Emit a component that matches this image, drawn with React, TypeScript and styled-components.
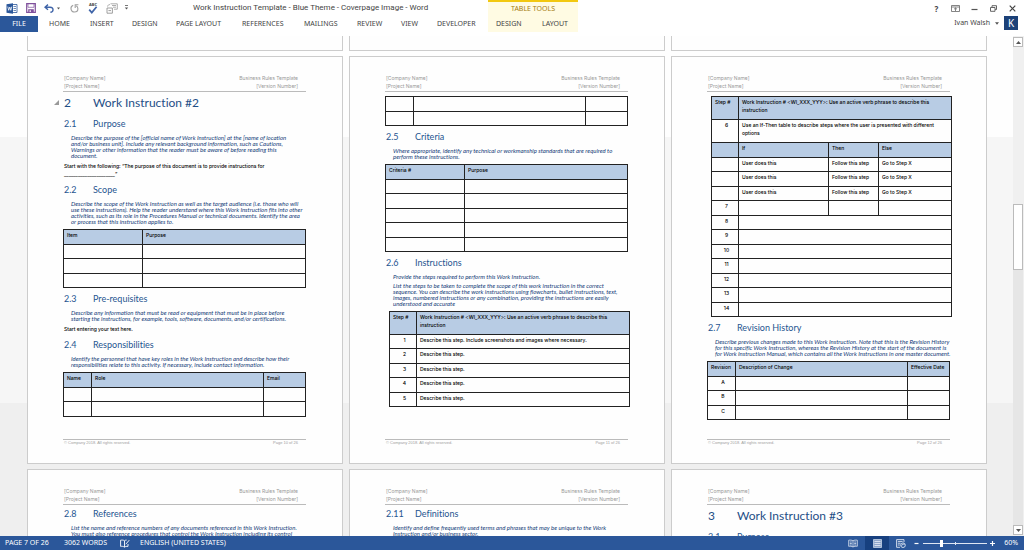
import React from 'react';
import styled, { createGlobalStyle, css } from 'styled-components';

const ui = `'Noto Sans', 'Open Sans', sans-serif`;
const body = `Inter, 'Noto Sans', Arial, sans-serif`;
const display = `Lato, 'Century Gothic', sans-serif`;

const Global = createGlobalStyle`
  *, *::before, *::after { box-sizing: border-box; }
  body { margin: 0; background: #fff; font-family: ${ui}; font-variant-ligatures: none; }
  button { border: 0; padding: 0; background: none; font: inherit; color: inherit; cursor: pointer; }
  h1, h2, p { margin: 0; font-weight: 400; }
`;

const Shell = styled.div`
  display: flex;
  flex-direction: column;
  height: 100vh;
  overflow: hidden;
`;

/* ---------- title bar and ribbon ---------- */

const TopBar = styled.header`
  flex: none;
  height: 36px;
  display: flex;
  justify-content: space-between;
  color: #444;
`;

const TitleRow = styled.div`
  height: 16px;
  display: flex;
  align-items: center;
`;

const QuickAccess = styled.div`
  width: 193px;
  padding-left: 6px;
  display: flex;
  align-items: center;
`;

const QuickButton = styled.button<{ $w: number }>`
  width: ${(p) => p.$w}px;
  height: 14px;
  display: flex;
  align-items: center;
`;

const DocTitle = styled.span`
  font-family: Roboto, 'Open Sans', sans-serif;
  font-size: 8px;
  line-height: 16px;
  white-space: nowrap;
`;

const Tabs = styled.nav`
  display: flex;
  height: 16px;
`;

const Tab = styled.button<{ $w: number }>`
  width: ${(p) => p.$w}px;
  text-align: left;
  font-size: 7px;
  line-height: 16px;
  white-space: nowrap;
`;

const FileTab = styled.button`
  width: 38px;
  margin-right: 11px;
  background: #2b579a;
  color: #fff;
  font-size: 7px;
  line-height: 16px;
`;

const MainPart = styled.div`
  display: flex;
`;

const ContextGroup = styled.div`
  width: 90px;
  height: 32px;
  border-top: 2px solid #f2c811;
  background: #fffbe3;
`;

const ContextTitle = styled.div`
  height: 14px;
  font-size: 7px;
  line-height: 13px;
  text-align: center;
  color: #a57c10;
`;

const ContextTabs = styled.div`
  display: flex;
  justify-content: space-between;
  padding: 0 10px 0 8px;
  font-size: 7px;
  line-height: 16px;
`;

const TopRight = styled.div`
  display: flex;
  flex-direction: column;
  align-items: flex-end;
  padding-right: 6px;
`;

const WindowButtons = styled.div`
  height: 16px;
  display: flex;
  align-items: center;
  gap: 8px;
`;

const WindowButton = styled.button`
  width: 11px;
  height: 12px;
  display: flex;
  align-items: center;
  justify-content: center;
  font-size: 8px;
  font-weight: 700;
`;

const Account = styled.button`
  display: flex;
  align-items: center;
  gap: 5px;
  font-size: 7px;
  line-height: 14px;
`;

const Avatar = styled.span`
  width: 14px;
  height: 14px;
  background: #1c4178;
  color: #fff;
  font-size: 10px;
  line-height: 14px;
  text-align: center;
`;

/* ---------- document area ---------- */

const Workspace = styled.main`
  flex: 1;
  min-height: 0;
  display: flex;
  background: linear-gradient(to bottom, #fefefe 0 101px, #f6f6f6 101px 367px, #efefef 367px);
`;

const Canvas = styled.div`
  flex: 1;
  min-width: 0;
  overflow: hidden;
  display: grid;
  grid-template-columns: repeat(3, minmax(0, 1fr));
  grid-auto-rows: max-content;
  gap: 5px 6px;
  padding: 0 26px 0 27px;
`;

const PageTail = styled.div`
  height: 15px;
  background: #fefefe;
  border: 1px solid #ccc;
  border-top: 0;
`;

const Sheet = styled.article`
  min-height: 408px;
  display: flex;
  flex-direction: column;
  padding: 17px 36px 12px 35px;
  background: #fefefe;
  border: 1px solid #ccc;
`;

const PageHeader = styled.div`
  display: flex;
  justify-content: space-between;
  padding: 0 8px 1px 1px;
  border-bottom: 1px solid #bbb;
  font-family: ${body};
  font-size: 5px;
  line-height: 8px;
  color: #999;
`;

const HeaderColumn = styled.div<{ $right?: boolean }>`
  display: flex;
  flex-direction: column;
  text-align: ${(p) => (p.$right ? 'right' : 'left')};
`;

const PageFooter = styled.div`
  margin-top: auto;
  display: flex;
  justify-content: space-between;
  padding: 0 8px 5px 1px;
  border-top: 1px solid #bbb;
  font-family: 'Liberation Sans', Arial, sans-serif;
  font-size: 4px;
  line-height: 6px;
  color: #a0a0a0;
`;

const Grid = styled.table<{ $inset?: boolean }>`
  width: ${(p) => (p.$inset ? '241px' : '100%')};
  margin-left: ${(p) => (p.$inset ? '4px' : '0')};
  border-collapse: collapse;
  table-layout: fixed;
  font-family: ${body};
  font-size: 5px;
  line-height: 8px;
  color: #000;

  tr { height: 15px; }
  tr:nth-child(even) { height: 14px; }
`;

const cell = css<{ $center?: boolean }>`
  padding: 1px 0 0 3px;
  border: 1px solid #222;
  font-weight: 500;
  vertical-align: top;
  white-space: nowrap;
  text-align: ${(p) => (p.$center ? 'center' : 'left')};
`;

const Th = styled.th<{ $center?: boolean }>`
  ${cell}
  background: #b8cce4;
`;

const Td = styled.td<{ $center?: boolean }>`
  ${cell}
`;

const TallRow = styled.tr`
  &&& { height: 23px; }
`;

const Content = styled.div`
  padding-top: 3px;

  table:first-child { margin-top: 1px; }
  p + table { margin-top: 4px; }
  p + p { margin-top: 3px; }
  p + h2 { margin-top: 6px; }
  table + h2 { margin-top: 5px; }
`;

const Chapter = styled.h1`
  position: relative;
  display: flex;
  padding-left: 1px;
  margin-bottom: 7px;
  font-family: ${display};
  font-size: 12px;
  line-height: 16px;
  color: #1f4e86;
  white-space: nowrap;
`;

const Section = styled.h2`
  display: flex;
  padding-left: 1px;
  margin-bottom: 5px;
  font-family: ${display};
  font-size: 9px;
  line-height: 12px;
  color: #1f5590;
  white-space: nowrap;
`;

const Num = styled.span`
  width: 29px;
`;

const CollapseMark = styled.svg`
  position: absolute;
  left: -9px;
  top: 5px;
`;

const Guide = styled.p`
  padding-left: 8px;
  font-family: ${display};
  font-size: 6px;
  font-style: italic;
  line-height: 6px;
  color: #123a78;
  white-space: nowrap;
`;

const Plain = styled.p`
  padding-left: 1px;
  font-family: ${body};
  font-size: 5px;
  font-weight: 500;
  line-height: 8px;
  color: #000;
  white-space: nowrap;
`;

const Line = styled.span`
  display: block;
`;

/* ---------- scroll bar ---------- */

const ScrollBar = styled.div`
  width: 11px;
  padding: 1px 1px 1px 0;
  display: flex;
  flex-direction: column;
  background: #f0f0f0;
`;

const ScrollButton = styled.button`
  height: 10px;
  border: 1px solid #bbb;
  background: #fff;
  display: flex;
  align-items: center;
  justify-content: center;
`;

const TrackAbove = styled.div`
  flex: 158;
`;

const Thumb = styled.div`
  flex: 64;
  border: 1px solid #bbb;
  background: #fff;
`;

const TrackBelow = styled.div`
  flex: 256;
  background: #e6e6e6;
`;

/* ---------- status bar ---------- */

const StatusBar = styled.footer`
  flex: none;
  height: 14px;
  display: flex;
  align-items: center;
  justify-content: space-between;
  padding: 0 6px 0 5px;
  background: #2b579a;
  color: #fff;
  font-size: 7px;
  line-height: 14px;
`;

const StatusGroup = styled.div`
  display: flex;
  align-items: center;
`;

const StatusItem = styled.button<{ $w: number }>`
  width: ${(p) => p.$w}px;
  height: 14px;
  display: flex;
  align-items: center;
  white-space: nowrap;
`;

const ViewButton = styled.button<{ $active?: boolean }>`
  width: 24px;
  height: 14px;
  display: flex;
  align-items: center;
  justify-content: center;
  background: ${(p) => (p.$active ? '#17407f' : 'transparent')};
`;

const ZoomStep = styled.button`
  width: 7px;
  height: 14px;
  display: flex;
  align-items: center;
  justify-content: center;
`;

const ZoomRange = styled.input`
  appearance: none;
  width: 64px;
  height: 7px;
  margin: 0 2px 0 3px;
  background:
    linear-gradient(#dfe7f3, #dfe7f3) 32px 2px / 1px 3px no-repeat,
    linear-gradient(#dfe7f3, #dfe7f3) 0 3px / 100% 1px no-repeat;

  &::-webkit-slider-thumb {
    appearance: none;
    width: 3px;
    height: 7px;
    background: #fff;
  }
`;

const ZoomValue = styled.button`
  width: 22px;
  text-align: right;
`;

const Caret = ({ up = false, size = 5 }: { up?: boolean; size?: number }) => (
  <svg width={size} height="3" viewBox="0 0 5 3" aria-hidden="true">
    <path d={up ? 'M0 3L2.5 0L5 3Z' : 'M0 0H5L2.5 3Z'} fill="#555" />
  </svg>
);

const WordIcon = () => (
  <svg width="12" height="11" viewBox="0 0 12 11" aria-hidden="true">
    <path d="M6.5 1.5H11V9.5H6.5" fill="#fff" stroke="#2b579a" strokeWidth="0.8" />
    <path d="M7.5 3.5H10M7.5 5.5H10M7.5 7.5H10" stroke="#2b579a" strokeWidth="0.7" />
    <path d="M0.5 1.3L7 0.2V10.8L0.5 9.7Z" fill="#2b579a" />
    <path d="M1.8 3.6L2.7 7.3L3.8 4L4.8 7.3L5.8 3.6" fill="none" stroke="#fff" strokeWidth="0.8" />
  </svg>
);

const SaveIcon = () => (
  <svg width="10" height="10" viewBox="0 0 10 10" aria-hidden="true">
    <path d="M0.7 0.7H9.3V9.3H0.7Z" fill="#fff" stroke="#80519c" strokeWidth="1.2" />
    <path d="M2 1V4.3H8V1" fill="none" stroke="#80519c" strokeWidth="0.7" />
    <path d="M2.2 9V6.2H7.8V9Z" fill="#80519c" />
    <path d="M3.6 7.2H4.8V9H3.6Z" fill="#fff" />
  </svg>
);

const UndoIcon = () => (
  <svg width="10" height="9" viewBox="0 0 10 9" aria-hidden="true">
    <path d="M4 0.6L1 3.2L4 5.8M1.2 3.2H6C8.2 3.2 9.1 4.6 9 6C8.9 7.3 7.8 8.2 6.4 8.3" fill="none" stroke="#3f64a8" strokeWidth="1.4" />
  </svg>
);

const RedoIcon = () => (
  <svg width="9" height="9" viewBox="0 0 9 9" aria-hidden="true">
    <path d="M3.2 1.2C1.6 1.8 0.8 3.2 1 4.8C1.3 6.8 2.7 8 4.5 8C6.4 8 7.9 6.7 7.9 4.7C7.9 3.4 7.3 2.4 6.2 1.8" fill="none" stroke="#a0a0a0" strokeWidth="1.1" />
    <path d="M8.4 0.8H5.2V3.9" fill="none" stroke="#a0a0a0" strokeWidth="1.1" />
  </svg>
);

const SpellIcon = () => (
  <svg width="10" height="12" viewBox="0 0 10 12" aria-hidden="true">
    <text x="5" y="4" textAnchor="middle" fontFamily="Noto Sans, sans-serif" fontWeight="700" fontSize="4" fill="#444">ABC</text>
    <path d="M1.2 7.6L3.8 10.6L8.6 4.8" fill="none" stroke="#3f64a8" strokeWidth="1.7" />
  </svg>
);

const TouchIcon = () => (
  <svg width="12" height="11" viewBox="0 0 12 11" aria-hidden="true">
    <path d="M4.5 0.8H11.3V6.2H8" fill="none" stroke="#999" strokeWidth="0.8" />
    <path d="M6 2.5H10M7 4.2H10" stroke="#999" strokeWidth="0.8" />
    <path d="M1 5H6.4V10.2H1ZM2.4 7.6H5" fill="#fff" stroke="#888" strokeWidth="0.8" />
    <path d="M1.6 3.6C1.6 2.2 2.6 1.6 4 1.6" fill="none" stroke="#999" strokeWidth="0.8" />
  </svg>
);

const MenuCaret = () => (
  <svg width="5" height="6" viewBox="0 0 5 6" aria-hidden="true">
    <path d="M1 0.5H4" stroke="#555" strokeWidth="0.8" />
    <path d="M0.8 2.6H4.2L2.5 4.6Z" fill="#555" />
  </svg>
);

const H = ({ n, children }: { n: string; children: string }) => (
  <Section><Num>{n}</Num>{children}</Section>
);

const G = ({ lines }: { lines: string[] }) => (
  <Guide>{lines.map((t) => <Line key={t}>{t}</Line>)}</Guide>
);

const Cols = ({ widths }: { widths: number[] }) => (
  <colgroup>
    {widths.map((w, i) => <col key={i} style={w ? { width: w } : undefined} />)}
  </colgroup>
);

type SimpleTableProps = {
  widths: number[];
  head?: string[];
  rows: string[][];
  label: string;
};

const SimpleTable = ({ widths, head, rows, label }: SimpleTableProps) => (
  <Grid aria-label={label}>
    <Cols widths={widths} />
    <tbody>
      {head && <tr>{head.map((t) => <Th key={t} scope="col">{t}</Th>)}</tr>}
      {rows.map((r, i) => (
        <tr key={i}>{r.map((t, j) => <Td key={j} $center={j === 0}>{t}</Td>)}</tr>
      ))}
    </tbody>
  </Grid>
);

const blank = (rows: number, cols: number) =>
  Array.from({ length: rows }, () => Array.from({ length: cols }, () => ''));

const StepHead = ({ span = 1 }: { span?: number }) => (
  <TallRow>
    <Th scope="col">Step #</Th>
    <Th scope="col" colSpan={span}>
      <Line>Work Instruction # &lt;WI_XXX_YYY&gt;: Use an active verb phrase to describe this</Line>
      <Line>instruction</Line>
    </Th>
  </TallRow>
);

const Page = ({ number, children }: { number?: number; children: React.ReactNode }) => (
  <Sheet>
    <PageHeader>
      <HeaderColumn><span>[Company Name]</span><span>[Project Name]</span></HeaderColumn>
      <HeaderColumn $right><span>Business Rules Template</span><span>[Version Number]</span></HeaderColumn>
    </PageHeader>
    <Content>{children}</Content>
    {number && (
      <PageFooter>
        <span>© Company 2018. All rights reserved.</span>
        <span>Page {number} of 26</span>
      </PageFooter>
    )}
  </Sheet>
);

const tabs: [string, number][] = [
  ['HOME', 41], ['INSERT', 42], ['DESIGN', 44], ['PAGE LAYOUT', 66], ['REFERENCES', 62],
  ['MAILINGS', 53], ['REVIEW', 44], ['VIEW', 36], ['DEVELOPER', 51],
];

export default function App() {
  return (
    <Shell>
      <Global />
      <TopBar>
        <MainPart>
          <div>
            <TitleRow>
              <QuickAccess>
                <QuickButton $w={20} aria-label="Word"><WordIcon /></QuickButton>
                <QuickButton $w={18} aria-label="Save"><SaveIcon /></QuickButton>
                <QuickButton $w={13} aria-label="Undo"><UndoIcon /></QuickButton>
                <QuickButton $w={13} aria-label="Undo history"><Caret size={3} /></QuickButton>
                <QuickButton $w={18} aria-label="Repeat"><RedoIcon /></QuickButton>
                <QuickButton $w={18} aria-label="Spelling"><SpellIcon /></QuickButton>
                <QuickButton $w={18} aria-label="Switch mode"><TouchIcon /></QuickButton>
                <QuickButton $w={8} aria-label="Customize toolbar"><MenuCaret /></QuickButton>
              </QuickAccess>
              <DocTitle>Work Instruction Template - Blue Theme - Coverpage Image - Word</DocTitle>
            </TitleRow>
            <Tabs>
              <FileTab>FILE</FileTab>
              {tabs.map(([t, w]) => <Tab key={t} $w={w}>{t}</Tab>)}
            </Tabs>
          </div>
          <ContextGroup>
            <ContextTitle>TABLE TOOLS</ContextTitle>
            <ContextTabs><button>DESIGN</button><button>LAYOUT</button></ContextTabs>
          </ContextGroup>
        </MainPart>
        <TopRight>
          <WindowButtons>
            <WindowButton aria-label="Help">?</WindowButton>
            <WindowButton aria-label="Ribbon display options">
              <svg width="9" height="7" viewBox="0 0 9 7"><path d="M0.5 0.5H8.5V6.5H0.5ZM0.5 2H8.5M4.5 6V3M3 4.3L4.5 2.9L6 4.3" fill="none" stroke="#666" strokeWidth="0.8" /></svg>
            </WindowButton>
            <WindowButton aria-label="Minimize">
              <svg width="7" height="7" viewBox="0 0 7 7"><path d="M0.5 4.5H6.5" stroke="#555" strokeWidth="1.2" /></svg>
            </WindowButton>
            <WindowButton aria-label="Restore">
              <svg width="7" height="7" viewBox="0 0 7 7"><path d="M2 2V0.7H6.5V4.5H5.2M0.5 2.5H5V6.3H0.5Z" fill="none" stroke="#555" strokeWidth="0.9" /></svg>
            </WindowButton>
            <WindowButton aria-label="Close">
              <svg width="7" height="7" viewBox="0 0 7 7"><path d="M0.7 0.7L6.3 6.3M6.3 0.7L0.7 6.3" stroke="#444" strokeWidth="1.2" /></svg>
            </WindowButton>
          </WindowButtons>
          <Account>
            <span>Ivan Walsh</span>
            <Caret size={4} />
            <Avatar>K</Avatar>
          </Account>
        </TopRight>
      </TopBar>

      <Workspace>
        <Canvas>
          <PageTail /><PageTail /><PageTail />

          <Page number={10}>
            <Chapter>
              <CollapseMark width="5" height="5" viewBox="0 0 5 5"><path d="M5 0V5H0Z" fill="#999" /></CollapseMark>
              <Num>2</Num>Work Instruction #2
            </Chapter>
            <H n="2.1">Purpose</H>
            <G lines={[
              'Describe the purpose of the [official name of Work Instruction] at the [name of location',
              'and/or business unit]. Include any relevant background information, such as Cautions,',
              'Warnings or other information that the reader must be aware of before reading this',
              'document.',
            ]} />
            <Plain>
              <Line>Start with the following: “The purpose of this document is to provide instructions for</Line>
              <Line>______________________”</Line>
            </Plain>
            <H n="2.2">Scope</H>
            <G lines={[
              'Describe the scope of the Work Instruction as well as the target audience (i.e. those who will',
              'use these instructions). Help the reader understand where this Work Instruction fits into other',
              'activities, such as its role in the Procedures Manual or technical documents. Identify the area',
              'or process that this instruction applies to.',
            ]} />
            <Grid aria-label="Scope items">
              <Cols widths={[79, 0]} />
              <tbody>
                <tr><Th scope="col">Item</Th><Th scope="col">Purpose</Th></tr>
                {blank(3, 2).map((r, i) => <tr key={i}>{r.map((t, j) => <Td key={j}>{t}</Td>)}</tr>)}
              </tbody>
            </Grid>
            <H n="2.3">Pre-requisites</H>
            <G lines={[
              'Describe any information that must be read or equipment that must be in place before',
              'starting the instructions, for example, tools, software, documents, and/or certifications.',
            ]} />
            <Plain>Start entering your text here.</Plain>
            <H n="2.4">Responsibilities</H>
            <G lines={[
              'Identify the personnel that have key roles in the Work Instruction and describe how their',
              'responsibilities relate to this activity. If necessary, include contact information.',
            ]} />
            <SimpleTable label="Responsibilities" widths={[28, 0, 42]} head={['Name', 'Role', 'Email']} rows={blank(2, 3)} />
          </Page>

          <Page number={11}>
            <SimpleTable label="Responsibilities, continued" widths={[28, 0, 42]} rows={blank(2, 3)} />
            <H n="2.5">Criteria</H>
            <G lines={[
              'Where appropriate, identify any technical or workmanship standards that are required to',
              'perform these instructions.',
            ]} />
            <SimpleTable label="Criteria" widths={[79, 0]} head={['Criteria #', 'Purpose']} rows={blank(5, 2)} />
            <H n="2.6">Instructions</H>
            <G lines={['Provide the steps required to perform this Work Instruction.']} />
            <G lines={[
              'List the steps to be taken to complete the scope of this work instruction in the correct',
              'sequence. You can describe the work instructions using flowcharts, bullet instructions, text,',
              'images, numbered instructions or any combination, providing the instructions are easily',
              'understood and accurate',
            ]} />
            <Grid $inset aria-label="Steps">
              <Cols widths={[27, 0]} />
              <tbody>
                <StepHead />
                {[1, 2, 3, 4, 5].map((n) => (
                  <tr key={n}>
                    <Td $center>{n}</Td>
                    <Td>{n === 1 ? 'Describe this step. Include screenshots and images where necessary.' : 'Describe this step.'}</Td>
                  </tr>
                ))}
              </tbody>
            </Grid>
          </Page>

          <Page number={12}>
            <Grid $inset aria-label="Steps, continued">
              <Cols widths={[27, 0, 50, 73]} />
              <tbody>
                <StepHead span={3} />
                <TallRow>
                  <Td $center>6</Td>
                  <Td colSpan={3}>
                    <Line>Use an If-Then table to describe steps where the user is presented with different</Line>
                    <Line>options</Line>
                  </Td>
                </TallRow>
                <tr><Th /><Th scope="col">If</Th><Th scope="col">Then</Th><Th scope="col">Else</Th></tr>
                {[0, 1, 2].map((i) => (
                  <tr key={i}><Td /><Td>User does this</Td><Td>Follow this step</Td><Td>Go to Step X</Td></tr>
                ))}
                <tr><Td $center>7</Td><Td /><Td /><Td /></tr>
                {[8, 9, 10, 11, 12, 13, 14].map((n) => (
                  <tr key={n}><Td $center>{n}</Td><Td colSpan={3} /></tr>
                ))}
              </tbody>
            </Grid>
            <H n="2.7">Revision History</H>
            <G lines={[
              'Describe previous changes made to this Work Instruction. Note that this is the Revision History',
              'for this specific Work Instruction, whereas the Revision History at the start of the document is',
              'for Work Instruction Manual, which contains all the Work Instructions in one master document.',
            ]} />
            <SimpleTable
              label="Revision history"
              widths={[28, 0, 42]}
              head={['Revision', 'Description of Change', 'Effective Date']}
              rows={[['A', '', ''], ['B', '', ''], ['C', '', '']]}
            />
          </Page>

          <Page>
            <H n="2.8">References</H>
            <G lines={[
              'List the name and reference numbers of any documents referenced in this Work Instruction.',
              'You must also reference procedures that control the Work Instruction including its control',
            ]} />
          </Page>
          <Page>
            <H n="2.11">Definitions</H>
            <G lines={[
              'Identify and define frequently used terms and phrases that may be unique to the Work',
              'Instruction and/or business sector.',
            ]} />
          </Page>
          <Page>
            <Chapter><Num>3</Num>Work Instruction #3</Chapter>
            <H n="3.1">Purpose</H>
          </Page>
        </Canvas>
        <ScrollBar>
          <ScrollButton aria-label="Scroll up"><Caret up /></ScrollButton>
          <TrackAbove />
          <Thumb />
          <TrackBelow />
          <ScrollButton aria-label="Scroll down"><Caret /></ScrollButton>
        </ScrollBar>
      </Workspace>

      <StatusBar>
        <StatusGroup>
          <StatusItem $w={59}>PAGE 7 OF 26</StatusItem>
          <StatusItem $w={56}>3062 WORDS</StatusItem>
          <StatusItem $w={20} aria-label="Proofing">
            <svg width="10" height="9" viewBox="0 0 10 9"><path d="M4.5 1.8C3.5 1 2 1 0.6 1.2V7.4C2 7.2 3.5 7.3 4.5 8.2C5.3 7.4 6.6 7.2 8 7.4V5M4.5 1.8V8M4.5 1.8C5 1.3 5.8 1.1 6.6 1.1M5.8 5.2L9.3 1.1" fill="none" stroke="#fff" strokeWidth="0.9" /></svg>
          </StatusItem>
          <StatusItem $w={90}>ENGLISH (UNITED STATES)</StatusItem>
        </StatusGroup>
        <StatusGroup>
          <ViewButton aria-label="Read mode">
            <svg width="10" height="9" viewBox="0 0 10 9"><path d="M5 1.8C3.8 1 2.2 1 0.7 1.2V7.3C2.2 7.1 3.8 7.2 5 8C6.2 7.2 7.8 7.1 9.3 7.3V1.2C7.8 1 6.2 1 5 1.8ZM5 2V8M1.8 3H3.8M1.8 4.5H3.8M1.8 6H3.8M6.2 3H8.2M6.2 4.5H8.2M6.2 6H8.2" fill="none" stroke="#dfe7f3" strokeWidth="0.8" /></svg>
          </ViewButton>
          <ViewButton $active aria-label="Print layout">
            <svg width="9" height="9" viewBox="0 0 9 9"><path d="M0.5 0.5H8.5V8.5H0.5Z" fill="#8fa6cb" stroke="#b9c8e0" strokeWidth="0.9" /><path d="M1.5 2.5H7.5M1.5 4.5H7.5M1.5 6.5H7.5" fill="none" stroke="#dfe7f3" strokeWidth="0.9" /></svg>
          </ViewButton>
          <ViewButton aria-label="Web layout">
            <svg width="10" height="9" viewBox="0 0 10 9"><path d="M4 8.3H0.6V0.6H8V3M1.8 2.4H6.6M1.8 4.2H4.6M1.8 6H3.8" fill="none" stroke="#dfe7f3" strokeWidth="0.9" /><circle cx="7" cy="6.2" r="2.3" fill="#2b579a" stroke="#dfe7f3" strokeWidth="0.9" /><path d="M5.5 6.8L7 5L8.6 5.4" fill="none" stroke="#dfe7f3" strokeWidth="0.8" /></svg>
          </ViewButton>
          <ZoomStep aria-label="Zoom out">
            <svg width="5" height="5" viewBox="0 0 5 5"><path d="M0.5 2.5H4.5" stroke="#fff" strokeWidth="1.2" /></svg>
          </ZoomStep>
          <ZoomRange type="range" aria-label="Zoom" min={0} max={100} defaultValue={28} />
          <ZoomStep aria-label="Zoom in">
            <svg width="5" height="5" viewBox="0 0 5 5"><path d="M0 2.5H5M2.5 0V5" stroke="#fff" strokeWidth="1.2" /></svg>
          </ZoomStep>
          <ZoomValue>60%</ZoomValue>
        </StatusGroup>
      </StatusBar>
    </Shell>
  );
}
